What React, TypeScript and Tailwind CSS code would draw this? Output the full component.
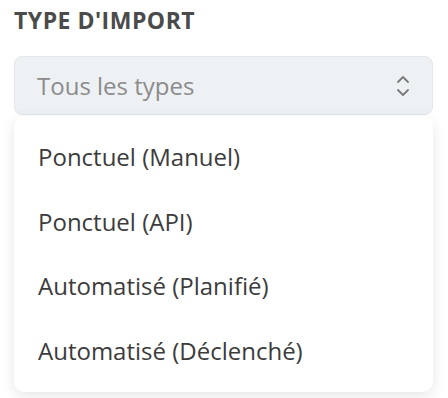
import React from "react";

const items = [
  "Ponctuel (Manuel)",
  "Ponctuel (API)",
  "Automatisé (Planifié)",
  "Automatisé (Déclenché)",
];

export default function App() {
  return (
    <div
      className="w-[448px] h-[398px] bg-white overflow-hidden pl-[14px] pr-[15px] pt-[5px]"
      style={{ fontFamily: '"Open Sans", sans-serif' }}
    >
      <div className="text-[23px] leading-[31px] font-bold text-[#4b4b4b] tracking-[0.5px]">
        TYPE D'IMPORT
      </div>
      <div className="mt-[20px] h-[59px] rounded-[8px] bg-[#eef1f4] border border-[#e3e6ea] flex items-center justify-between pl-[22px] pr-[22px]">
        <span className="text-[24px] text-[#8b8b8b]">Tous les types</span>
        <svg width="14" height="24" viewBox="0 0 14 24" fill="none" stroke="#7a7a7a" strokeWidth="1.8" strokeLinecap="round" strokeLinejoin="round">
          <path d="M2 8 L7 3 L12 8" />
          <path d="M2 16 L7 21 L12 16" />
        </svg>
      </div>
      <div className="mt-[1px] rounded-[10px] bg-white shadow-[0_4px_14px_rgba(0,0,0,0.10)] py-[9px]">
        {items.map((t) => (
          <div key={t} className="h-[64.5px] flex items-center pl-[24px] text-[24px] text-[#3c3c3c]">
            {t}
          </div>
        ))}
      </div>
    </div>
  );
}
